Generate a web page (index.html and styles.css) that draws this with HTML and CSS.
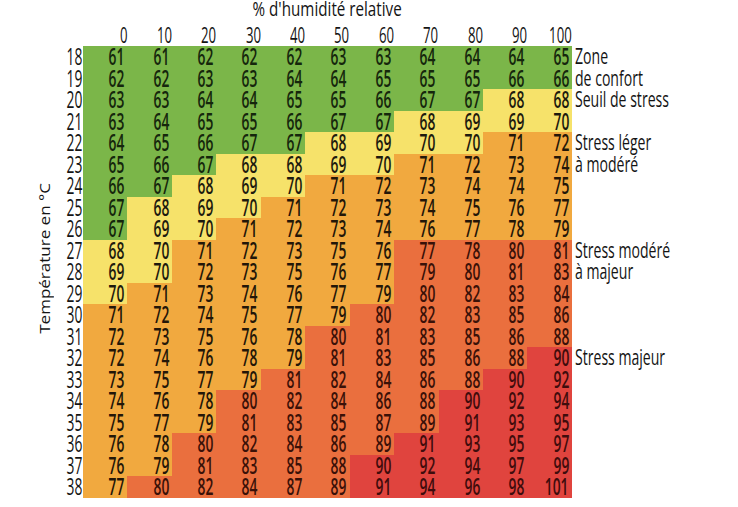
FILE: index.html
```html
<!DOCTYPE html>
<html lang="fr">
<head>
<meta charset="utf-8">
<title>Indice température-humidité</title>
<link rel="stylesheet" href="styles.css">
</head>
<body>
<div class="chart">
  <div class="axis"><span>Température en °C</span></div>
  <div class="table">
    <div class="line title"><div class="tt"><span>% d'humidité relative</span></div></div>
    <div class="line head"><div></div><div><span>0</span></div><div><span>10</span></div><div><span>20</span></div><div><span>30</span></div><div><span>40</span></div><div><span>50</span></div><div><span>60</span></div><div><span>70</span></div><div><span>80</span></div><div><span>90</span></div><div><span>100</span></div></div>

    <div class="line"><div class="rl"><span>18</span></div><div class="g"><span>61</span></div><div class="g"><span>61</span></div><div class="g"><span>62</span></div><div class="g"><span>62</span></div><div class="g"><span>62</span></div><div class="g"><span>63</span></div><div class="g"><span>63</span></div><div class="g"><span>64</span></div><div class="g"><span>64</span></div><div class="g"><span>64</span></div><div class="g"><span>65</span></div><div class="note"><span>Zone</span></div></div>
    <div class="line"><div class="rl"><span>19</span></div><div class="g"><span>62</span></div><div class="g"><span>62</span></div><div class="g"><span>63</span></div><div class="g"><span>63</span></div><div class="g"><span>64</span></div><div class="g"><span>64</span></div><div class="g"><span>65</span></div><div class="g"><span>65</span></div><div class="g"><span>65</span></div><div class="g"><span>66</span></div><div class="g"><span>66</span></div><div class="note"><span>de confort</span></div></div>
    <div class="line"><div class="rl"><span>20</span></div><div class="g"><span>63</span></div><div class="g"><span>63</span></div><div class="g"><span>64</span></div><div class="g"><span>64</span></div><div class="g"><span>65</span></div><div class="g"><span>65</span></div><div class="g"><span>66</span></div><div class="g"><span>67</span></div><div class="g"><span>67</span></div><div class="y"><span>68</span></div><div class="y"><span>68</span></div><div class="note"><span>Seuil de stress</span></div></div>
    <div class="line"><div class="rl"><span>21</span></div><div class="g"><span>63</span></div><div class="g"><span>64</span></div><div class="g"><span>65</span></div><div class="g"><span>65</span></div><div class="g"><span>66</span></div><div class="g"><span>67</span></div><div class="g"><span>67</span></div><div class="y"><span>68</span></div><div class="y"><span>69</span></div><div class="y"><span>69</span></div><div class="y"><span>70</span></div></div>
    <div class="line"><div class="rl"><span>22</span></div><div class="g"><span>64</span></div><div class="g"><span>65</span></div><div class="g"><span>66</span></div><div class="g"><span>67</span></div><div class="g"><span>67</span></div><div class="y"><span>68</span></div><div class="y"><span>69</span></div><div class="y"><span>70</span></div><div class="y"><span>70</span></div><div class="o"><span>71</span></div><div class="o"><span>72</span></div><div class="note"><span>Stress léger</span></div></div>
    <div class="line"><div class="rl"><span>23</span></div><div class="g"><span>65</span></div><div class="g"><span>66</span></div><div class="g"><span>67</span></div><div class="y"><span>68</span></div><div class="y"><span>68</span></div><div class="y"><span>69</span></div><div class="y"><span>70</span></div><div class="o"><span>71</span></div><div class="o"><span>72</span></div><div class="o"><span>73</span></div><div class="o"><span>74</span></div><div class="note"><span>à modéré</span></div></div>
    <div class="line"><div class="rl"><span>24</span></div><div class="g"><span>66</span></div><div class="g"><span>67</span></div><div class="y"><span>68</span></div><div class="y"><span>69</span></div><div class="y"><span>70</span></div><div class="o"><span>71</span></div><div class="o"><span>72</span></div><div class="o"><span>73</span></div><div class="o"><span>74</span></div><div class="o"><span>74</span></div><div class="o"><span>75</span></div></div>
    <div class="line"><div class="rl"><span>25</span></div><div class="g"><span>67</span></div><div class="y"><span>68</span></div><div class="y"><span>69</span></div><div class="y"><span>70</span></div><div class="o"><span>71</span></div><div class="o"><span>72</span></div><div class="o"><span>73</span></div><div class="o"><span>74</span></div><div class="o"><span>75</span></div><div class="o"><span>76</span></div><div class="o"><span>77</span></div></div>
    <div class="line"><div class="rl"><span>26</span></div><div class="g"><span>67</span></div><div class="y"><span>69</span></div><div class="y"><span>70</span></div><div class="o"><span>71</span></div><div class="o"><span>72</span></div><div class="o"><span>73</span></div><div class="o"><span>74</span></div><div class="o"><span>76</span></div><div class="o"><span>77</span></div><div class="o"><span>78</span></div><div class="o"><span>79</span></div></div>
    <div class="line"><div class="rl"><span>27</span></div><div class="y"><span>68</span></div><div class="y"><span>70</span></div><div class="o"><span>71</span></div><div class="o"><span>72</span></div><div class="o"><span>73</span></div><div class="o"><span>75</span></div><div class="o"><span>76</span></div><div class="d"><span>77</span></div><div class="d"><span>78</span></div><div class="d"><span>80</span></div><div class="d"><span>81</span></div><div class="note"><span>Stress modéré</span></div></div>
    <div class="line"><div class="rl"><span>28</span></div><div class="y"><span>69</span></div><div class="y"><span>70</span></div><div class="o"><span>72</span></div><div class="o"><span>73</span></div><div class="o"><span>75</span></div><div class="o"><span>76</span></div><div class="o"><span>77</span></div><div class="d"><span>79</span></div><div class="d"><span>80</span></div><div class="d"><span>81</span></div><div class="d"><span>83</span></div><div class="note"><span>à majeur</span></div></div>
    <div class="line"><div class="rl"><span>29</span></div><div class="y"><span>70</span></div><div class="o"><span>71</span></div><div class="o"><span>73</span></div><div class="o"><span>74</span></div><div class="o"><span>76</span></div><div class="o"><span>77</span></div><div class="o"><span>79</span></div><div class="d"><span>80</span></div><div class="d"><span>82</span></div><div class="d"><span>83</span></div><div class="d"><span>84</span></div></div>
    <div class="line"><div class="rl"><span>30</span></div><div class="o"><span>71</span></div><div class="o"><span>72</span></div><div class="o"><span>74</span></div><div class="o"><span>75</span></div><div class="o"><span>77</span></div><div class="o"><span>79</span></div><div class="d"><span>80</span></div><div class="d"><span>82</span></div><div class="d"><span>83</span></div><div class="d"><span>85</span></div><div class="d"><span>86</span></div></div>
    <div class="line"><div class="rl"><span>31</span></div><div class="o"><span>72</span></div><div class="o"><span>73</span></div><div class="o"><span>75</span></div><div class="o"><span>76</span></div><div class="o"><span>78</span></div><div class="d"><span>80</span></div><div class="d"><span>81</span></div><div class="d"><span>83</span></div><div class="d"><span>85</span></div><div class="d"><span>86</span></div><div class="d"><span>88</span></div></div>
    <div class="line"><div class="rl"><span>32</span></div><div class="o"><span>72</span></div><div class="o"><span>74</span></div><div class="o"><span>76</span></div><div class="o"><span>78</span></div><div class="o"><span>79</span></div><div class="d"><span>81</span></div><div class="d"><span>83</span></div><div class="d"><span>85</span></div><div class="d"><span>86</span></div><div class="d"><span>88</span></div><div class="r"><span>90</span></div><div class="note"><span>Stress majeur</span></div></div>
    <div class="line"><div class="rl"><span>33</span></div><div class="o"><span>73</span></div><div class="o"><span>75</span></div><div class="o"><span>77</span></div><div class="o"><span>79</span></div><div class="d"><span>81</span></div><div class="d"><span>82</span></div><div class="d"><span>84</span></div><div class="d"><span>86</span></div><div class="d"><span>88</span></div><div class="r"><span>90</span></div><div class="r"><span>92</span></div></div>
    <div class="line"><div class="rl"><span>34</span></div><div class="o"><span>74</span></div><div class="o"><span>76</span></div><div class="o"><span>78</span></div><div class="d"><span>80</span></div><div class="d"><span>82</span></div><div class="d"><span>84</span></div><div class="d"><span>86</span></div><div class="d"><span>88</span></div><div class="r"><span>90</span></div><div class="r"><span>92</span></div><div class="r"><span>94</span></div></div>
    <div class="line"><div class="rl"><span>35</span></div><div class="o"><span>75</span></div><div class="o"><span>77</span></div><div class="o"><span>79</span></div><div class="d"><span>81</span></div><div class="d"><span>83</span></div><div class="d"><span>85</span></div><div class="d"><span>87</span></div><div class="d"><span>89</span></div><div class="r"><span>91</span></div><div class="r"><span>93</span></div><div class="r"><span>95</span></div></div>
    <div class="line"><div class="rl"><span>36</span></div><div class="o"><span>76</span></div><div class="o"><span>78</span></div><div class="d"><span>80</span></div><div class="d"><span>82</span></div><div class="d"><span>84</span></div><div class="d"><span>86</span></div><div class="d"><span>89</span></div><div class="r"><span>91</span></div><div class="r"><span>93</span></div><div class="r"><span>95</span></div><div class="r"><span>97</span></div></div>
    <div class="line"><div class="rl"><span>37</span></div><div class="o"><span>76</span></div><div class="o"><span>79</span></div><div class="d"><span>81</span></div><div class="d"><span>83</span></div><div class="d"><span>85</span></div><div class="d"><span>88</span></div><div class="r"><span>90</span></div><div class="r"><span>92</span></div><div class="r"><span>94</span></div><div class="r"><span>97</span></div><div class="r"><span>99</span></div></div>
    <div class="line"><div class="rl"><span>38</span></div><div class="o"><span>77</span></div><div class="d"><span>80</span></div><div class="d"><span>82</span></div><div class="d"><span>84</span></div><div class="d"><span>87</span></div><div class="d"><span>89</span></div><div class="r"><span>91</span></div><div class="r"><span>94</span></div><div class="r"><span>96</span></div><div class="r"><span>98</span></div><div class="r"><span>101</span></div></div>
  </div>
</div>
</body>
</html>
```

FILE: styles.css
```css
html, body {
  margin: 0;
  padding: 0;
  background: #ffffff;
}

body {
  font-family: "Open Sans", "DejaVu Sans", sans-serif;
  color: #141414;
}

.chart {
  display: flex;
  width: 738px;
  height: 507px;
  overflow: hidden;
}

.axis {
  width: 55px;
  flex: none;
  display: flex;
  justify-content: flex-end;
  align-items: flex-start;
  padding-top: 183px;
  box-sizing: border-box;
}

.axis span {
  writing-mode: vertical-rl;
  transform: rotate(180deg) scaleX(0.8);
  font-size: 17px;
  font-weight: 500;
  line-height: 20px;
  color: #141414;
}

.table {
  display: flex;
  flex-direction: column;
  flex: none;
  width: 683px;
}

.line {
  display: grid;
  grid-template-columns: 28px repeat(11, 44.45px) 1fr;
  height: 21.5px;
}

.line > div {
  text-align: right;
  padding-right: 3px;
  font-size: 23px;
  font-weight: 600;
  line-height: 21.5px;
  white-space: nowrap;
}

.line span {
  display: inline-block;
  transform: scaleX(0.6);
  transform-origin: 100% 50%;
}

.title {
  height: 22px;
}

.line > .tt {
  grid-column: 2 / 13;
  text-align: center;
  padding-right: 0;
  font-size: 20px;
  line-height: 17px;
  font-weight: 500;
}

.title .tt span {
  transform: scaleX(0.76);
  transform-origin: 50% 50%;
}

.head {
  height: 24px;
}

.head > div {
  font-size: 22px;
  line-height: 25px;
  padding-right: 0;
  font-weight: 500;
}

.line > .rl {
  padding-right: 1px;
  font-weight: 500;
}

.line > .note {
  text-align: left;
  padding-left: 3px;
  padding-right: 0;
  font-size: 21px;
  font-weight: 500;
}

.note span {
  transform: scaleX(0.67);
  transform-origin: 0 50%;
}

.g { background: #7bb649; color: #15260c; }
.y { background: #f6e26a; color: #1d1a0e; }
.o { background: #f1a93f; color: #231608; }
.d { background: #ea6f3e; color: #3a1108; }
.r { background: #e0443e; color: #3f0c0c; }
```
